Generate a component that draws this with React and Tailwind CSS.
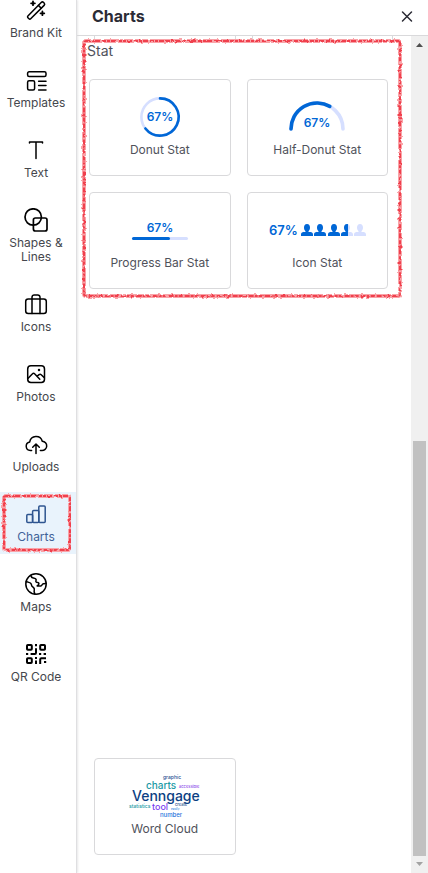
import React from "react";

const PERSON =
  "M6 0C4.100 0 3 1.500 3 3.600c0 1.700.7 3.100 1.600 3.700v.5C3 8.200 0 8 0 10.500V12h12v-1.500C12 8 9 8.200 7.400 7.800v-.5C8.300 6.700 9 5.300 9 3.600 9 1.500 7.900 0 6 0z";

const navItems = [
  {
    label: "Brand Kit",
    icon: (
      <>
        <path d="M3.9 18 17.2 4.5a1.7 1.7 0 0 1 2.4 0l.5.5a1.7 1.7 0 0 1 0 2.4L6.7 20.8a1.2 1.2 0 0 1-1.7 0l-1.1-1.1a1.2 1.2 0 0 1 0-1.7z" />
        <path d="m14.4 7.4 2.8 2.8" />
        <path d="M9 3.4v3.8M7.1 5.300h3.8M18.4 13.400v3.800M16.500 15.300h3.800" strokeWidth="1.800" />
      </>
    ),
  },
  {
    label: "Templates",
    icon: (
      <>
        <rect x="3.6" y="3.8" width="18.4" height="4.6" rx="1.5" />
        <rect x="3.6" y="12.8" width="7" height="9.2" rx="1.5" />
        <path d="M14.6 13.3H22M14.6 17.6H22M14.6 22H22" />
      </>
    ),
  },
  { label: "Text", icon: <path d="M5.5 5V4h13v1M12 4v16.5" /> },
  {
    label: "Shapes & Lines",
    icon: (
      <g strokeWidth="1.7">
        <circle cx="9.2" cy="9" r="8.2" />
        <rect x="9.4" y="10" width="13.6" height="13" rx="2" />
      </g>
    ),
  },
  {
    label: "Icons",
    icon: (
      <>
        <rect x="1.7" y="7" width="20.6" height="14.4" rx="2.5" />
        <path d="M8 21.4V5.2A2.2 2.2 0 0 1 10.2 3h3.6A2.2 2.2 0 0 1 16 5.2v16.2" />
      </>
    ),
  },
  {
    label: "Photos",
    icon: (
      <>
        <rect x="3.7" y="3.7" width="16.8" height="16.8" rx="3.2" />
        <path d="m3.9 16.6 4.6-4.9a1.4 1.4 0 0 1 2.1 0l5.2 5.6M12.9 14.4l2.2-1.8a1.6 1.6 0 0 1 2.1.1l3.1 2.9" />
        <circle cx="15" cy="8" r=".5" />
      </>
    ),
  },
  {
    label: "Uploads",
    icon: (
      <>
        <path d="M7.6 18.6H6.4a4.4 4.4 0 0 1-.7-8.7 6.5 6.5 0 0 1 12.6-.7 4.7 4.7 0 0 1-.6 9.4h-1.3" />
        <path d="M12 21.4v-9M8.7 15.3 12 12l3.3 3.3" />
      </>
    ),
  },
  {
    label: "Charts",
    active: true,
    icon: (
      <>
        <rect x="2.8" y="12.6" width="5.8" height="8" rx="1" />
        <rect x="8.6" y="8.6" width="6.2" height="12" rx="1" />
        <rect x="14.8" y="4" width="6.4" height="16.6" rx="1" />
      </>
    ),
  },
  {
    label: "Maps",
    icon: (
      <>
        <circle cx="12" cy="12" r="10.2" />
        <path d="M6.800 3.400c.2 1.600 1.100 2.300 2.500 2.600 2 .4 3.400 1 2.700 2.600-.5 1.300.2 1.800 1.800 2 1.300.2 1.400 1.200.6 2.200l-1.200 1.100h3.600c1.200-.2 1.300-1.900 2.500-2.200l2.800-.3" />
        <path d="M2.200 9.400c1.700 1 3.400 1 4.300 1.700 1.400 1 .6 2.300 1.700 3.300 1.300 1.100 2.600 1.500 2.100 3.200-.4 1.400-.2 2.900.5 4.300" />
      </>
    ),
  },
  {
    label: "QR Code",
    icon: (
      <g strokeWidth="2">
        <rect x="3" y="3" width="4.800" height="4.800" rx=".8" />
        <rect x="16.200" y="3" width="4.800" height="4.800" rx=".8" />
        <rect x="3" y="16.200" width="4.800" height="4.800" rx=".8" />
        <path
          strokeLinecap="butt"
          d="M12 2v2.200M12 6.200v4.600q0 1.200-1.200 1.200H6.600M2 12h2.200M11 16h2M12 18.400V22M15 12h2.200M19.600 12H22M16.200 22v-4.600q0-1.200 1.200-1.200H22M20 20h2.200"
        />
      </g>
    ),
  },
];

const Percent = ({ x, y, size = 12, anchor = "middle" }) => (
  <text x={x} y={y} fontSize={size} fontWeight="600" textAnchor={anchor} fill="#0067d6">
    67%
  </text>
);

const people = [34, 47, 61, 74, 87];

const stats = [
  {
    label: "Donut Stat",
    art: (
      <>
        <circle cx="50" cy="20" r="18.6" fill="none" stroke="#d6dfff" strokeWidth="2.6" />
        <path
          d="M50 1.400A18.600 18.600 0 1 1 35.400 31.500"
          fill="none"
          stroke="#0067d6"
          strokeWidth="2.6"
          strokeLinecap="round"
        />
        <Percent x={50} y={24} />
      </>
    ),
  },
  {
    label: "Half-Donut Stat",
    art: (
      <>
        <g fill="none" strokeWidth="3.6" strokeLinecap="round">
          <path d="M24 32a26 26 0 0 1 52 0" stroke="#d6dfff" />
          <path d="M24 32a26 26 0 0 1 38.800-22.600" stroke="#0067d6" />
        </g>
        <Percent x={50} y={30} />
      </>
    ),
  },
  {
    label: "Progress Bar Stat",
    art: (
      <>
        <Percent x={50} y={22} />
        <rect x="22" y="27" width="56" height="3" rx="1.500" fill="#d6dfff" />
        <rect x="22" y="27" width="38" height="3" rx="1.500" fill="#0067d6" />
      </>
    ),
  },
  {
    label: "Icon Stat",
    art: (
      <>
        <Percent x={2} y={25} size={13} anchor="start" />
        <clipPath id="people-value">
          <rect x="30" y="10" width="51" height="20" />
        </clipPath>
        <g fill="#d6dfff">
          {people.map((x) => (
            <path key={x} d={PERSON} transform={`translate(${x} 14)`} />
          ))}
        </g>
        <g fill="#0067d6" clipPath="url(#people-value)">
          {people.slice(0, 4).map((x) => (
            <path key={x} d={PERSON} transform={`translate(${x} 14)`} />
          ))}
        </g>
      </>
    ),
  },
];

const words = [
  { text: "graphic", x: 48, y: 3, size: 5, color: "#1d4f8f" },
  { text: "charts", x: 31, y: 13, size: 10, color: "#1a9aa5" },
  { text: "accessible", x: 64, y: 12, size: 4, color: "#8c4bea" },
  { text: "Venngage", x: 17, y: 25, size: 14, color: "#0b4083" },
  { text: "statistics", x: 14, y: 32, size: 5, color: "#1a9aa5" },
  { text: "tool", x: 37, y: 34, size: 9, color: "#7b3ff0" },
  { text: "create", x: 60, y: 30, size: 4, color: "#1d4f8f" },
  { text: "easily", x: 56, y: 34, size: 3, color: "#3a87e0" },
  { text: "number", x: 45, y: 41, size: 6, color: "#1f74dc" },
];

// Hand-drawn marker outline around its parent
const MarkerOutline = ({ id }) => (
  <svg className="pointer-events-none absolute inset-0 h-full w-full overflow-visible" aria-hidden="true">
    <filter id={id} filterUnits="userSpaceOnUse" x="-6" y="-6" width="110%" height="120%">
      <feTurbulence type="fractalNoise" baseFrequency="0.3" numOctaves="2" seed="4" />
      <feDisplacementMap in="SourceGraphic" scale="3" xChannelSelector="R" yChannelSelector="G" />
    </filter>
    <g fill="none" filter={`url(#${id})`}>
      <rect width="100%" height="100%" rx="2" stroke="#f9a3a8" strokeWidth="4" />
      <rect width="100%" height="100%" rx="2" stroke="#f0414d" strokeWidth="2" strokeDasharray="4 1 3 1 5 2" />
    </g>
  </svg>
);

const NavItem = ({ label, icon, active }) => (
  <li className="relative">
    <a
      href="#"
      className={`flex flex-col items-center gap-1 py-2.5 pr-1 text-center text-[12px] leading-[14px] ${
        active ? "bg-[#e9f3fc] text-[#3f6299]" : "text-[#45474d]"
      }`}
    >
      <svg
        viewBox="0 0 24 24"
        className={`size-6 ${active ? "text-[#2f5590]" : "text-black"}`}
        fill="none"
        stroke="currentColor"
        strokeWidth="1.500"
        strokeLinecap="round"
        strokeLinejoin="round"
      >
        {icon}
      </svg>
      <span className="w-16">{label}</span>
    </a>
    {active && (
      <div className="absolute top-1 right-1.5 bottom-1 left-1">
        <MarkerOutline id="marker-nav" />
      </div>
    )}
  </li>
);

const ChartCard = ({ label, children }) => (
  <button className="flex w-full flex-col items-center gap-[5px] rounded border border-[#d9d9db] bg-white py-[17px]">
    <svg viewBox="0 0 100 40" className="h-10 w-[100px] overflow-visible">
      {children}
    </svg>
    <span className="text-[12px] leading-4">{label}</span>
  </button>
);

const App = () => {
  return (
    <div className="flex min-h-screen overflow-hidden bg-white font-['Inter',sans-serif] text-[#50525b]">
      <nav className="w-[77px] shrink-0 border-r border-[#dfdfe1] shadow-[1px_0_2px_#e8e8ea]">
        <ul className="-mt-3 flex flex-col gap-2">
          {navItems.map((item) => (
            <NavItem key={item.label} {...item} />
          ))}
        </ul>
      </nav>

      <main className="flex min-w-0 grow flex-col">
        <header className="flex h-9 items-center justify-between border-b border-[#d9d9db] pr-3.5 pb-1 pl-[15px]">
          <h1 className="text-base font-bold text-[#2b2b35]">Charts</h1>
          <button aria-label="Close" className="text-[#2b2b35]">
            <svg viewBox="0 0 14 14" className="size-3.5" stroke="currentColor" strokeWidth="1.500" strokeLinecap="round">
              <path d="m2.500 3 9 9M11.500 3l-9 9" />
            </svg>
          </button>
        </header>

        <div className="flex grow">
          <div className="flex grow flex-col justify-between pb-[18px]">
            <div>
              {/* bottom edge of the previous section */}
              <div className="ml-[17px] mr-[18px] grid h-[5px] grid-cols-2 gap-4">
                <div className="border-x border-[#d9d9db]" />
                <div className="border-x border-[#d9d9db]" />
              </div>
              <section className="relative mr-[11px] ml-[7px] pr-3 pb-[7px] pl-[5px]">
                <h2 className="-ml-0.5 text-sm leading-5">Stat</h2>
                <div className="mt-[18px] grid grid-cols-2 gap-4">
                  {stats.map((stat) => (
                    <ChartCard key={stat.label} label={stat.label}>
                      {stat.art}
                    </ChartCard>
                  ))}
                </div>
                <MarkerOutline id="marker-stat" />
              </section>
            </div>

            <div className="ml-[17px] mr-[18px] grid grid-cols-2 gap-4">
              <ChartCard label="Word Cloud">
                {words.map((w) => (
                  <text key={w.text} x={w.x} y={w.y} fontSize={w.size} fontWeight="500" fill={w.color}>
                    {w.text}
                  </text>
                ))}
              </ChartCard>
            </div>
          </div>

          <div className="flex w-[17px] shrink-0 flex-col items-center bg-[#f0f0f0]" aria-hidden="true">
            <svg viewBox="0 0 17 17" className="size-[17px]">
              <path d="M5 11h7L8.500 7z" fill="#505050" />
            </svg>
            <div className="grow-[388]" />
            <div className="w-[13px] grow-[415] bg-[#c1c1c1]" />
            <svg viewBox="0 0 17 17" className="size-[17px]">
              <path d="M5 6h7l-3.500 4z" fill="#a3a3a3" />
            </svg>
          </div>
        </div>
      </main>
    </div>
  );
};

export default App;
